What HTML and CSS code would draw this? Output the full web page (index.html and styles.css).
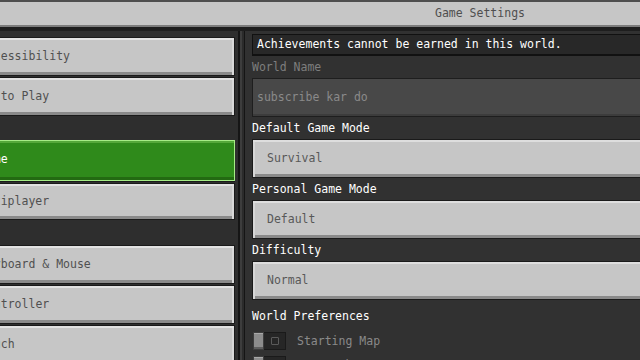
FILE: index.html
```html
<!DOCTYPE html>
<html>
<head>
<meta charset="utf-8">
<link rel="stylesheet" href="styles.css">
</head>
<body>
<header class="topbar">
  <div class="title">Game Settings</div>
</header>
<main class="main">
  <nav class="side">
    <div class="btn first">Accessibility</div>
    <div class="btn shift">How to Play</div>
    <div class="btn selected">Game</div>
    <div class="btn shift short">Multiplayer</div>
    <div class="btn sect">Keyboard &amp; Mouse</div>
    <div class="btn">Controller</div>
    <div class="btn">Touch</div>
  </nav>
  <div class="divider"></div>
  <section class="content">
    <div class="banner">Achievements cannot be earned in this world.</div>
    <div class="label disabled">World Name</div>
    <div class="field">subscribe kar do</div>
    <div class="label">Default Game Mode</div>
    <div class="dropdown">Survival</div>
    <div class="label">Personal Game Mode</div>
    <div class="dropdown">Default</div>
    <div class="label">Difficulty</div>
    <div class="dropdown">Normal</div>
    <div class="label heading">World Preferences</div>
    <div class="toggle-row">
      <div class="toggle"><span class="knob"></span><span class="track"><span class="ring"></span></span></div>
      <span class="toggle-text">Starting Map</span>
    </div>
    <div class="toggle-row next">
      <div class="toggle"><span class="knob"></span><span class="track"><span class="ring"></span></span></div>
      <span class="toggle-text">Bonus Chest</span>
    </div>
  </section>
</main>
</body>
</html>
```
FILE: styles.css
```css
* { box-sizing: border-box; }
html, body { margin: 0; padding: 0; }
body {
  width: 640px;
  height: 360px;
  overflow: hidden;
  background: #313131;
  font-family: "DejaVu Sans Mono", "Liberation Mono", monospace;
  font-size: 11.5px;
  color: #ffffff;
}
.topbar {
  height: 31px;
  background: #c6c6c6;
  border-top: 2px solid #4e4e4e;
  border-bottom: 4px solid #1e1e1e;
  box-shadow: inset 0 -2px 0 #7c7c7c;
}
.title {
  padding-left: 320px;
  text-align: center;
  line-height: 23px;
  color: #4f4f4f;
}
.main {
  display: grid;
  grid-template-columns: 238px 7px 1fr;
  height: 329px;
}
.side {
  overflow: hidden;
  background: #2e2e2e;
  padding-top: 6px;
  display: flex;
  flex-direction: column;
}
.btn {
  flex: none;
  height: 39px;
  margin: 0 3px 1px -30px;
  padding-left: 9px;
  line-height: 37px;
  background: #c6c6c6;
  color: #505050;
  border: 1px solid #1a1a1a;
  box-shadow: inset 0 2px 0 #e2e2e2, inset -2px 0 0 #d8d8d8, inset 0 -3px 0 #8a8a8a;
  white-space: nowrap;
}
.btn.shift { padding-left: 2px; }
.btn.short { height: 37px; line-height: 35px; }
.btn.selected {
  margin-top: 23px;
  height: 41px;
  background: #2f8a1b;
  color: #ffffff;
  border: 1px solid #a6ec86;
  box-shadow: inset 0 2px 0 #55a83a, inset 0 -3px 0 #236a12, 0 1px 0 #1a1a1a;
  margin-bottom: 2px;
}
.btn.sect { margin-top: 24px; }
.divider {
  background: #2b2b2b;
  border-left: 2px solid #151515;
  border-right: 1px solid #151515;
  box-shadow: inset 2px 0 0 #3d3d3d;
}
.content {
  overflow: hidden;
  padding: 3px 0 0 7px;
  display: flex;
  flex-direction: column;
}
.banner {
  flex: none;
  height: 22px;
  margin-right: -10px;
  padding-left: 4px;
  line-height: 19px;
  background: #282828;
  border: 1px solid #111111;
  border-bottom-width: 2px;
  color: #ffffff;
  white-space: nowrap;
}
.label {
  flex: none;
  height: 22px;
  line-height: 22px;
  color: #ffffff;
  white-space: nowrap;
}
.label.disabled { color: #7e7e7e; }
.field {
  flex: none;
  height: 39px;
  margin-right: -10px;
  padding-left: 4px;
  line-height: 36px;
  background: #484848;
  color: #8a8a8a;
  border: 1px solid #1e1e1e;
  box-shadow: inset 0 -2px 0 #3c3c3c;
}
.dropdown {
  flex: none;
  height: 39px;
  margin-right: -10px;
  padding-left: 14px;
  line-height: 36px;
  background: #c6c6c6;
  color: #585858;
  border: 1px solid #1a1a1a;
  box-shadow: inset 0 2px 0 #dedede, inset 2px 0 0 #d6d6d6, inset 0 -3px 0 #8a8a8a;
}
.label.heading { margin-top: 5px; }
.toggle-row {
  flex: none;
  display: flex;
  align-items: center;
  gap: 11px;
  height: 18px;
  margin-top: 5px;
}
.toggle-row.next { margin-top: 6px; }
.toggle {
  display: flex;
  width: 33px;
  height: 18px;
  margin-left: 1px;
}
.knob {
  width: 11px;
  background: #8c8c8c;
  border: 1px solid #3e3e3e;
  box-shadow: inset 0 1px 0 #a8a8a8, inset 0 -2px 0 #5e5e5e;
}
.track {
  flex: 1;
  display: flex;
  align-items: center;
  justify-content: center;
  background: #262626;
  border: 1px solid #1a1a1a;
  border-left: none;
}
.ring {
  width: 8px;
  height: 8px;
  border: 1px solid #5a5a5a;
  border-radius: 1px;
}
.toggle-text { color: #8a8a8a; }
```
